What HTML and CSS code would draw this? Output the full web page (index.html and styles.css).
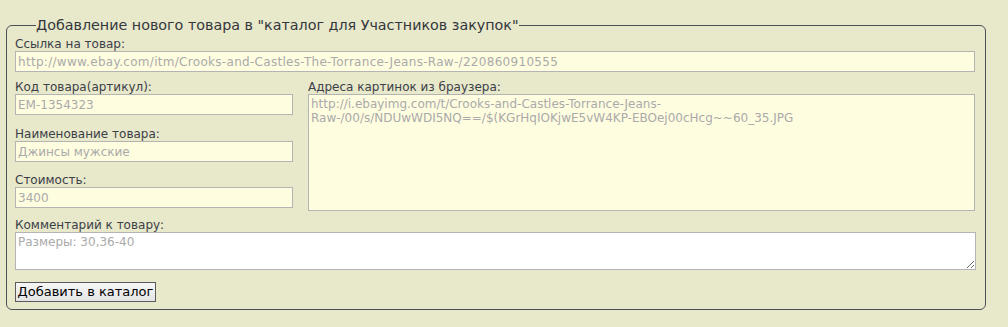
FILE: index.html
```html
<!DOCTYPE html>
<html lang="ru">
<head>
<meta charset="utf-8">
<title>Добавление товара</title>
<link rel="stylesheet" href="styles.css">
</head>
<body>
<form class="form">
  <fieldset class="box">
    <legend class="box-title">Добавление нового товара в "каталог для Участников закупок"</legend>
    <div class="field">
      <label class="lbl">Ссылка на товар:</label>
      <input class="inp inp-url" type="text" value="http://www.ebay.com/itm/Crooks-and-Castles-The-Torrance-Jeans-Raw-/220860910555">
    </div>
    <div class="row">
      <div class="col-left">
        <div class="field">
          <label class="lbl">Код товара(артикул):</label>
          <input class="inp" type="text" value="EM-1354323">
        </div>
        <div class="field gap12">
          <label class="lbl">Наименование товара:</label>
          <input class="inp" type="text" value="Джинсы мужские">
        </div>
        <div class="field gap11">
          <label class="lbl">Стоимость:</label>
          <input class="inp" type="text" value="3400">
        </div>
      </div>
      <div class="col-right">
        <div class="field">
          <label class="lbl">Адреса картинок из браузера:</label>
          <textarea class="ta ta-images">http://i.ebayimg.com/t/Crooks-and-Castles-Torrance-Jeans-
Raw-/00/s/NDUwWDI5NQ==/$(KGrHqIOKjwE5vW4KP-EBOej00cHcg~~60_35.JPG</textarea>
        </div>
      </div>
    </div>
    <div class="field comment">
      <label class="lbl">Комментарий к товару:</label>
      <textarea class="ta ta-comment">Размеры: 30,36-40</textarea>
    </div>
    <div class="actions">
      <button class="btn" type="button">Добавить в каталог</button>
    </div>
  </fieldset>
</form>
</body>
</html>
```
FILE: styles.css
```css
html, body {
  margin: 0;
  padding: 0;
}
body {
  background: #e8e8cb;
  font-family: "DejaVu Sans", Verdana, sans-serif;
  color: #353a40;
}
.form {
  padding: 16px 22px 0 6px;
}
.box {
  margin: 0;
  border: 1px solid #4d5157;
  border-radius: 6px;
  padding: 3px 10px 7px 8px;
  min-width: 0;
}
.box-title {
  font-size: 14.3px;
  line-height: 18px;
  padding: 0;
  margin-left: 21px;
  color: #33373c;
}
.field {
  display: flex;
  flex-direction: column;
}
.lbl {
  font-size: 12px;
  line-height: 14px;
  color: #3b4047;
}
.inp, .ta {
  box-sizing: border-box;
  width: 100%;
  margin: 0;
  border: 1px solid #b4b4b4;
  background: #fffde0;
  color: #aaaaaa;
  font-family: "DejaVu Sans", Verdana, sans-serif;
  font-size: 12px;
  outline: none;
}
.inp {
  height: 21px;
  padding: 0 2px;
}
.inp-url {
  letter-spacing: 0.3px;
}
.row {
  display: grid;
  grid-template-columns: 278px 1fr;
  column-gap: 15px;
  margin-top: 8px;
}
.gap12 { margin-top: 12px; }
.gap11 { margin-top: 11px; }
.ta {
  padding: 2px 2px;
  line-height: 14px;
  resize: none;
  display: block;
}
.ta-images {
  height: 117px;
}
.comment {
  margin-top: 7px;
}
.ta-comment {
  height: 38px;
  background: #ffffff;
  resize: both;
  width: calc(100% + 1px);
}
.actions {
  margin-top: 12px;
  display: flex;
}
.btn {
  height: 20px;
  width: 141px;
  padding: 0;
  margin: 0;
  border: 1px solid #5a5a5a;
  background: linear-gradient(#f6f6f6, #e4e4e4);
  color: #000;
  font-family: "DejaVu Sans", Verdana, sans-serif;
  font-size: 13px;
  line-height: 18px;
}
```
